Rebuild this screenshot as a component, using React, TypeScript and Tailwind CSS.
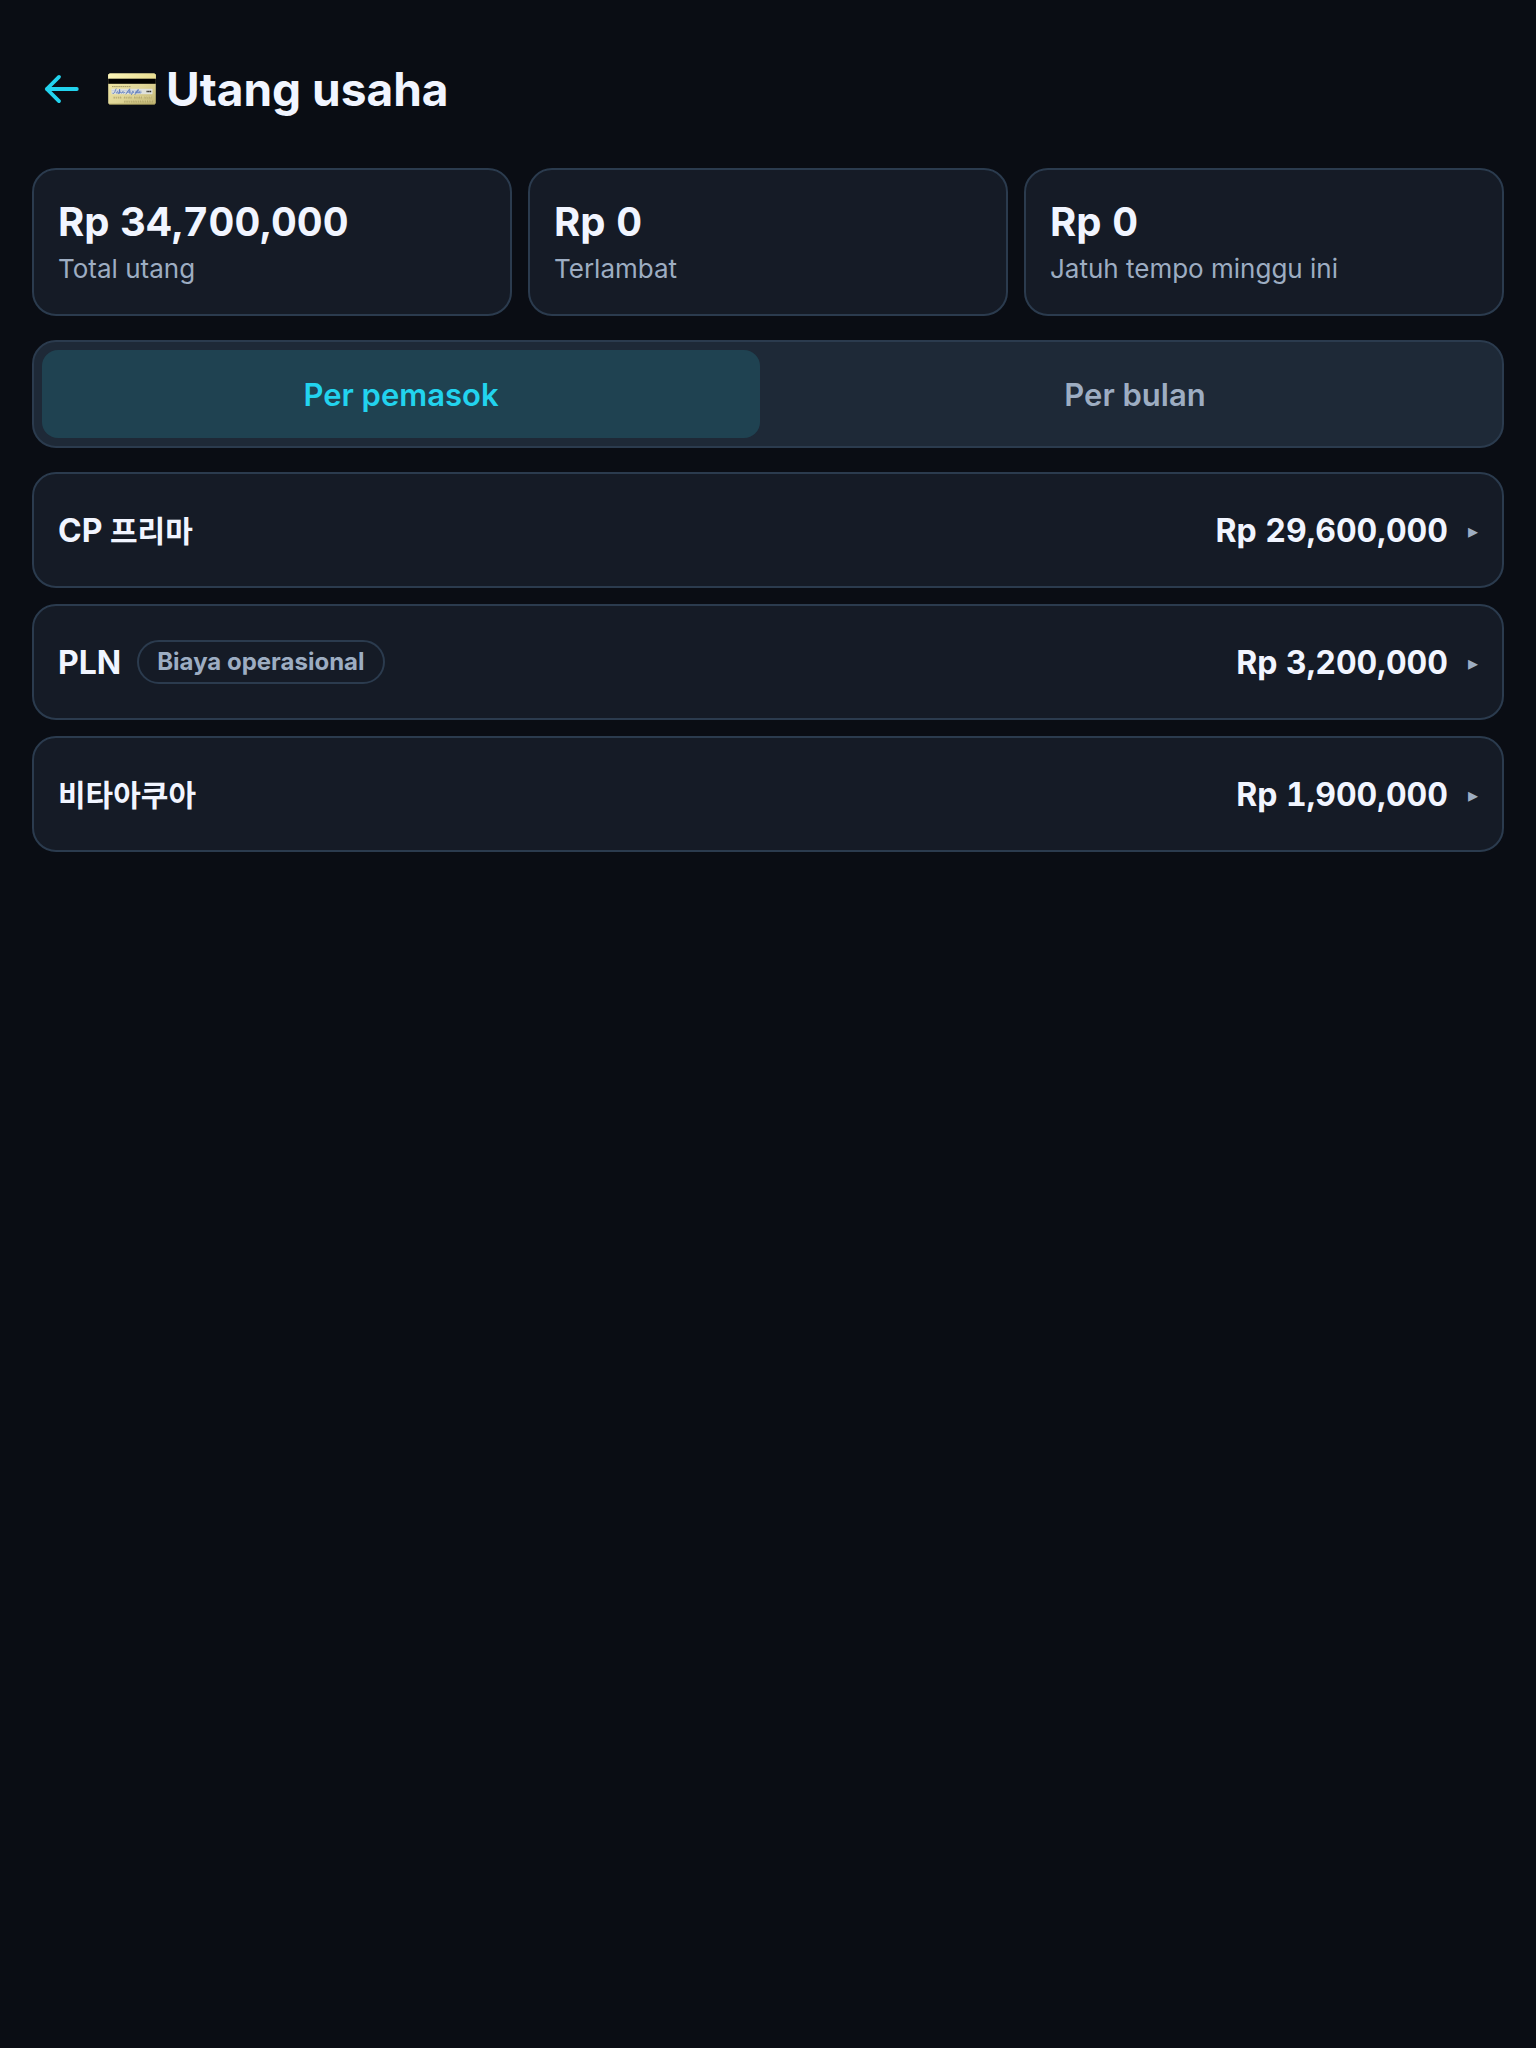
import React, { useState } from "react";

interface Payable {
  id: string;
  name: string;
  // Korean part of the supplier name, set slightly smaller than the Latin part
  hangul?: string;
  tag?: string;
  amount: number;
}

const PAYABLES: Payable[] = [
  { id: "cp", name: "CP", hangul: "프리마", amount: 29600000 },
  { id: "pln", name: "PLN", tag: "Biaya operasional", amount: 3200000 },
  { id: "vita", name: "", hangul: "비타아쿠아", amount: 1900000 },
];

const STATS = [
  { label: "Total utang", value: 34700000 },
  { label: "Terlambat", value: 0 },
  { label: "Jatuh tempo minggu ini", value: 0 },
];

const TABS = [
  { id: "supplier", label: "Per pemasok" },
  { id: "month", label: "Per bulan" },
] as const;

type TabId = (typeof TABS)[number]["id"];

const formatRp = (value: number) => `Rp ${value.toLocaleString("en-US")}`;

const BackArrow = () => (
  <svg
    className="h-8 w-9"
    viewBox="0 0 36 32"
    fill="none"
    stroke="currentColor"
    strokeWidth={3.8}
    strokeLinecap="round"
    strokeLinejoin="round"
    aria-hidden="true"
  >
    <path d="M32.800 16H2.800M15 3.900L2.800 16l12.200 12.100" />
  </svg>
);

// Back side of a credit card: magnetic stripe, signature panel, embossed digits.
const CardIcon = () => (
  <svg className="h-8 w-12" viewBox="0 0 48 32" aria-hidden="true">
    <defs>
      <linearGradient id="card-face" x1="0" y1="0" x2="1" y2="1">
        <stop offset="0" stopColor="#f3e9a6" />
        <stop offset="0.55" stopColor="#e0d698" />
        <stop offset="1" stopColor="#c0b472" />
      </linearGradient>
      <linearGradient id="card-top" x1="0" y1="0" x2="1" y2="0">
        <stop offset="0" stopColor="#fbf4b8" />
        <stop offset="1" stopColor="#e9dd92" />
      </linearGradient>
    </defs>
    <rect x="0.2" y="0.5" width="47.6" height="31" rx="1.8" fill="url(#card-face)" />
    <path d="M2 0.5h44a1.8 1.8 0 0 1 1.8 1.8V6H0.2V2.3A1.8 1.8 0 0 1 2 0.5z" fill="url(#card-top)" />
    <rect x="0.2" y="5.7" width="47.6" height="5.1" fill="#000" />
    <path d="M4 13.6h19" stroke="#8f8758" strokeWidth="0.8" strokeDasharray="1.6 0.5" />
    <rect x="3.5" y="15.8" width="41" height="5.4" fill="#dfe1dc" />
    <path d="M3.5 17.6h30M3.5 19.4h30" stroke="#b9c6dd" strokeWidth="0.6" />
    <path
      d="M5 20.6c2 .6 2.2-4 3-4.8M8.5 20c0-2 1.8-2 1.6 0s1.4.4 1.5-3.8v4.2c.8-2 1.5-1.6 1.7-.2l1.9-1.8c-1.2 1.2.2 2.4 1.5 1M18 21l3.6-5.2.4 4.8M19.2 19h3M23.5 21.5l1-3.2c1.6-.4 1.4 1.8.2 1.9M27 21.5l1-3.2c1.6-.4 1.4 1.8.2 1.9l2-3.8-.4 3.8c1.5-.2 1.6-2 2.3-1.8-1.6 1.6-.4 2.4 1.1 1"
      stroke="#5f7cbd"
      strokeWidth="0.9"
      strokeLinecap="round"
      fill="none"
    />
    <path d="M38.5 18.5h5" stroke="#33322c" strokeWidth="1.5" strokeDasharray="1.3 0.3" />
    <path d="M5.5 24.5h38" stroke="#b7ab70" strokeWidth="2" strokeDasharray="1.6 0.7 1.2 0.8 1.6 0.6 1.4 2.4" />
    <path d="M16 28.5h29" stroke="#b0a468" strokeWidth="1.8" strokeDasharray="1.5 0.8" />
    <path d="M5.5 23.8h38M16 27.9h29" stroke="#f0e8b4" strokeWidth="0.5" strokeDasharray="1.3 1.1" />
    <path d="M1 31.2h46" stroke="#958a4c" strokeWidth="0.7" />
  </svg>
);

const StatCard = ({ label, value }: { label: string; value: number }) => (
  <div className="rounded-3xl border-2 border-[#2b3b4e] bg-[#151b26] px-6 pt-6 pb-[26px]">
    <div className="text-[40px] leading-14 font-bold tabular-nums">
      {formatRp(value)}
    </div>
    <div className="text-[26px] leading-[38px] text-[#9dadc2]">{label}</div>
  </div>
);

const PayableRow = ({ item }: { item: Payable }) => (
  <li>
    <button
      type="button"
      className="flex w-full items-center justify-between gap-4 rounded-3xl border-2 border-[#2b3b4e] bg-[#151b26] px-6 py-[31px] text-left"
    >
      <span className="flex items-center gap-4">
        <span className="pt-0.5 text-[32px] leading-12 font-bold">
          {item.name}
          {item.name && item.hangul ? " " : ""}
          {item.hangul && (
            <span lang="ko" className="text-[30px] font-semibold">
              {item.hangul}
            </span>
          )}
        </span>
        {item.tag && (
          <span className="rounded-full border-2 border-[#2b3b4e] px-4.5 py-1 text-[24px] leading-8 font-bold text-[#9dadc2]">
            {item.tag}
          </span>
        )}
      </span>
      <span className="flex items-center gap-5 pt-0.5">
        <span className="text-[32px] leading-12 font-bold tabular-nums">
          {formatRp(item.amount)}
        </span>
        <span
          className="font-['DejaVu_Sans'] text-[20px] leading-12 text-[#9dadc2]"
          aria-hidden="true"
        >
          ▸
        </span>
      </span>
    </button>
  </li>
);

export default function App() {
  const [tab, setTab] = useState<TabId>("supplier");

  return (
    <main className="min-h-screen bg-[#0a0d14] px-8 pt-12 pb-8 font-['Inter','Noto_Sans_CJK_KR',sans-serif] text-[#f1f5ff]">
      <header className="flex h-[82px] items-center gap-5">
        <button type="button" aria-label="Kembali" className="pl-3 text-[#22d3ee]">
          <BackArrow />
        </button>
        <h1 className="flex items-center gap-2.5 pl-2 text-[46px] leading-16 font-bold">
          <CardIcon />
          Utang usaha
        </h1>
      </header>

      <section className="mt-[38px] grid grid-cols-3 gap-4">
        {STATS.map((stat) => (
          <StatCard key={stat.label} label={stat.label} value={stat.value} />
        ))}
      </section>

      <div
        role="tablist"
        className="mt-6 grid grid-cols-2 gap-4 rounded-3xl border-2 border-[#2b3b4e] bg-[#1e2937] p-2"
      >
        {TABS.map(({ id, label }) => (
          <button
            key={id}
            type="button"
            role="tab"
            aria-selected={tab === id}
            onClick={() => setTab(id)}
            className={`h-22 rounded-2xl pt-0.5 text-[31px] font-semibold ${
              tab === id ? "bg-[#1f4251] text-[#22d3ee]" : "text-[#9dadc2]"
            }`}
          >
            {label}
          </button>
        ))}
      </div>

      <ul className="mt-6 flex flex-col gap-4">
        {PAYABLES.map((item) => (
          <PayableRow key={item.id} item={item} />
        ))}
      </ul>
    </main>
  );
}
